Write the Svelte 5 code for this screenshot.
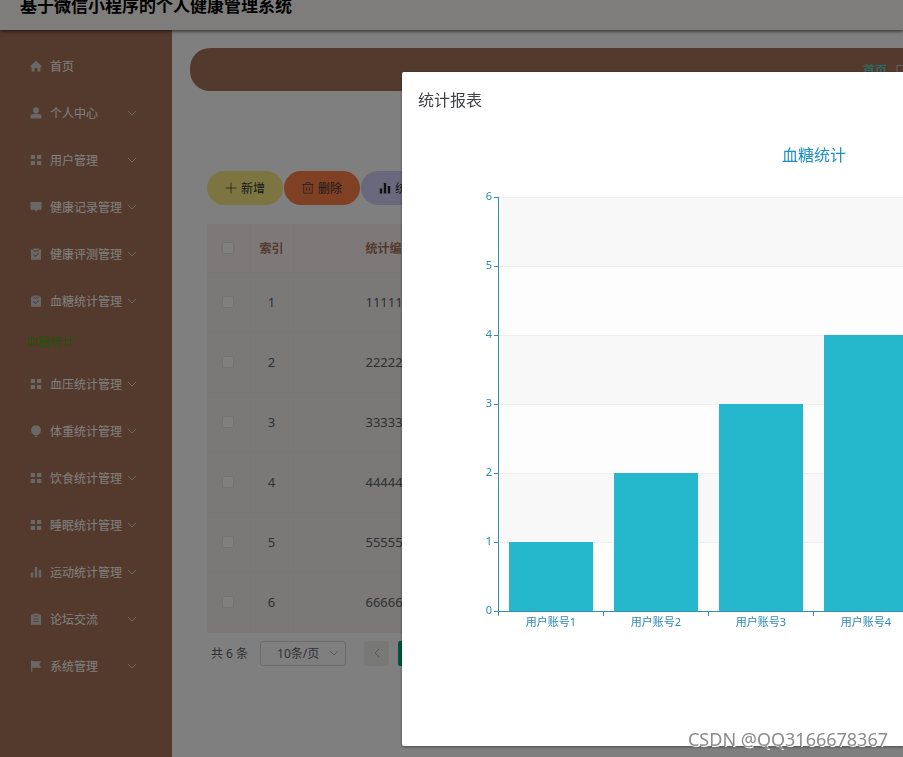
<script>
    const icons = {
        home: 'M6 0.8 L0.5 5.8 V7 H1.6 V11.5 H4.6 V8 H7.4 V11.5 H10.4 V7 H11.5 V5.8 Z',
        user: 'M6 0.3 a2.9 3.1 0 1 1 0 6.2 a2.9 3.1 0 1 1 0 -6.2 Z M0.5 11.5 V9.5 Q0.5 7.2 3.5 7 H8.5 Q11.5 7.2 11.5 9.5 V11.5 Z',
        grid: 'M1.2 1 H5 V5 H0.7 V1.5 Z M7 1 H11.3 V5 H7 Z M0.7 7 H5 V11 H0.7 Z M7 7 H11.3 V11 H7 Z',
        comment: 'M1 1 H11 Q11.5 1 11.5 1.5 V8.8 H8 L6 11 L4.5 8.8 H0.5 V1.5 Q0.5 1 1 1 Z',
        clip: 'M1 1.5 H3.5 V0.5 H8.5 V1.5 H11 V11.8 H1 Z M3.5 2.6 V3.5 H8.5 V2.6 Z M3 6.5 L5.4 9 L9.2 5.6 L8.6 5 L5.4 7.8 L3.7 6 Z',
        bulb: 'M6 0.3 a4.9 4.9 0 0 1 3.2 8.6 L8 10 H4 L2.8 8.9 A4.9 4.9 0 0 1 6 0.3 Z M4.5 10.6 H7.5 V11.8 H4.5 Z',
        bars: 'M0.8 6.5 H3.2 V11.5 H0.8 Z M4.8 1 H7.2 V11.5 H4.8 Z M8.8 4 H11.2 V11.5 H8.8 Z',
        order: 'M1 1.5 H3.5 V0.5 H8.5 V1.5 H11 V11.8 H1 Z M3.5 2.6 V3.5 H8.5 V2.6 Z M3 5.4 V6.3 H9 V5.4 Z M3 8.2 V9.1 H9 V8.2 Z',
        flag: 'M1 0.5 H2.4 V1.3 H11.2 L9.2 4.5 L11.2 7.7 H2.4 V11.8 H1 Z'
    };

    const menu = [
        { name: '首页', icon: 'home', leaf: true },
        { name: '个人中心', icon: 'user' },
        { name: '用户管理', icon: 'grid' },
        { name: '健康记录管理', icon: 'comment' },
        { name: '健康评测管理', icon: 'clip' },
        { name: '血糖统计管理', icon: 'clip', child: '血糖统计' },
        { name: '血压统计管理', icon: 'grid' },
        { name: '体重统计管理', icon: 'bulb' },
        { name: '饮食统计管理', icon: 'grid' },
        { name: '睡眠统计管理', icon: 'grid' },
        { name: '运动统计管理', icon: 'bars' },
        { name: '论坛交流', icon: 'order' },
        { name: '系统管理', icon: 'flag' }
    ];

    const rows = ['11111', '22222', '33333', '44444', '55555', '66666'];

    // chart geometry
    const left = 81;
    const bottom = 483;
    const unit = 69;
    const step = 105;
    const plotWidth = 630;
    const ticks = [0, 1, 2, 3, 4, 5, 6];
    const values = [1, 2, 3, 4, 5, 6];

    let pageSize = '10条/页';
</script>

<div class="page">
    <header>
        <h1>基于微信小程序的个人健康管理系统</h1>
    </header>
    <div class="container">
        <nav>
            <ul>
                {#each menu as item}
                    <li>
                        <a href="#/" class="item">
                            <svg class="icon" viewBox="0 0 12 12"><path d={icons[item.icon]} fill-rule="evenodd" /></svg>
                            <span>{item.name}</span>
                            {#if !item.leaf}
                                <svg class="arrow" viewBox="0 0 10 10"><path d="M1 3 L5 7 L9 3" /></svg>
                            {/if}
                        </a>
                        {#if item.child}
                            <a href="#/" class="child">{item.child}</a>
                        {/if}
                    </li>
                {/each}
            </ul>
        </nav>
        <main>
            <div class="breadcrumb">
                <a href="#/">首页</a>
                <span class="separator">口</span>
            </div>
            <div class="content">
                <div class="actions">
                    <button class="add">
                        <svg viewBox="0 0 12 12"><path d="M6 0.5 V11.5 M0.5 6 H11.5" /></svg>新增
                    </button>
                    <button class="delete">
                        <svg viewBox="0 0 12 12"><path d="M0.5 2.5 H11.5 M4 2.5 V0.7 H8 V2.5 M1.7 2.5 V11.3 H10.3 V2.5 M4.6 5 V9 M7.4 5 V9" /></svg>删除
                    </button>
                    <button class="report">
                        <svg viewBox="0 0 12 12"><path class="solid" d={icons.bars} /></svg>统计报表
                    </button>
                </div>
                <table>
                    <thead>
                        <tr>
                            <th class="check"><input type="checkbox" aria-label="全选"></th>
                            <th class="index">索引</th>
                            <th class="number">统计编号</th>
                        </tr>
                    </thead>
                    <tbody>
                        {#each rows as row, i}
                            <tr>
                                <td class="check"><input type="checkbox" aria-label="选择 {i + 1}"></td>
                                <td class="index">{i + 1}</td>
                                <td class="number">{row}</td>
                            </tr>
                        {/each}
                    </tbody>
                </table>
                <div class="pagination">
                    <span>共 6 条</span>
                    <div class="size">
                        <select bind:value={pageSize} aria-label="每页条数">
                            <option>10条/页</option>
                            <option>20条/页</option>
                        </select>
                        <svg class="arrow" viewBox="0 0 10 10"><path d="M1 3 L5 7 L9 3" /></svg>
                    </div>
                    <button class="prev" aria-label="上一页">
                        <svg class="arrow" viewBox="0 0 10 10"><path d="M7 1 L3 5 L7 9" /></svg>
                    </button>
                    <button class="current">1</button>
                </div>
            </div>
        </main>
    </div>
</div>

<div class="mask">
    <div class="dialog" role="dialog" aria-label="统计报表">
        <h2>统计报表</h2>
        <svg class="chart" width="792" height="598">
            <text class="chart-title" x={left + plotWidth / 2} y="33">血糖统计</text>
            {#each ticks.slice(1) as t}
                <rect x={left} y={bottom - t * unit} width={plotWidth} height={unit} fill={t % 2 ? '#fdfdfd' : '#f8f8f8'} />
                <rect x={left} y={bottom - t * unit} width={plotWidth} height="1" fill="#eeeeee" />
            {/each}
            {#each values as v, i}
                <rect class="bar" x={left + i * step + 10} y={bottom - v * unit} width="84" height={v * unit} />
                <text class="label" text-anchor="middle" x={left + i * step + 52} y={bottom + 15}>用户账号{v}</text>
            {/each}
            <g class="axis">
                <rect x={left - 1} y={bottom - 6 * unit} width="1" height={6 * unit + 5} />
                <rect x={left - 1} y={bottom} width={plotWidth} height="1" />
                {#each ticks as t}
                    <rect x={left - 5} y={bottom - t * unit} width="5" height="1" />
                    <rect x={left - 1 + t * step} y={bottom} width="1" height="5" />
                {/each}
            </g>
            {#each ticks as t}
                <text class="label" text-anchor="end" x={left - 7} y={bottom - t * unit + 3}>{t}</text>
            {/each}
        </svg>
    </div>
</div>
<div class="watermark">CSDN @QQ3166678367</div>

<style>
:global(body) {
    overflow: hidden;
    background: #fff;
    font-family: "Noto Sans", "Noto Sans CJK SC", sans-serif;
    font-size: 12px;
}

h1, h2, ul {
    margin: 0;
    padding: 0;
    list-style: none;
}

a {
    text-decoration: none;
}

button, select {
    font: inherit;
    border: 0;
    padding: 0;
}

.page {
    display: flex;
    flex-direction: column;
    height: 100vh;
    overflow: hidden;
}

header {
    flex: none;
    height: 30px;
    padding-left: 20px;
    background: #fdfbf7;
    box-shadow: 0 1px 4px rgba(0, 0, 0, 0.7);
    z-index: 1;
}

h1 {
    font-size: 17px;
    line-height: 12px;
    color: #000;
}

.container {
    display: flex;
    flex: 1;
}

nav {
    flex: none;
    width: 172px;
    padding-top: 12px;
    box-sizing: border-box;
    background: #a8745a;
}

.item {
    display: flex;
    align-items: center;
    height: 47px;
    padding: 0 35px 0 30px;
    color: #fff;
}

.icon {
    width: 12px;
    height: 12px;
    margin-right: 8px;
    fill: #d0d0d2;
}

.arrow {
    width: 10px;
    height: 10px;
    fill: none;
    stroke: #d8d0cc;
    stroke-width: 1;
}

.item .arrow {
    margin-left: auto;
}

.child {
    display: block;
    padding-left: 26px;
    line-height: 36px;
    color: #50a010;
}

main {
    flex: 1;
    min-width: 0;
    padding: 18px 0 0 18px;
}

.breadcrumb {
    display: flex;
    justify-content: flex-end;
    align-items: center;
    gap: 8px;
    height: 43px;
    border-radius: 20px 0 0 20px;
    background: #a8745a;
}

.breadcrumb a {
    font-weight: bold;
    color: #5cd0c8;
}

.separator {
    width: 8px;
    overflow: hidden;
    color: #c0c4cc;
}

.content {
    padding: 80px 0 0 17px;
}

.actions {
    display: flex;
    gap: 1px;
    margin-bottom: 19px;
}

.actions button {
    display: flex;
    flex: none;
    align-items: center;
    gap: 4px;
    height: 34px;
    padding: 0 18px;
    border-radius: 20px;
    color: #333;
}

.actions svg {
    width: 12px;
    height: 12px;
    fill: none;
    stroke: #444;
    stroke-width: 0.8;
}

.actions .solid {
    fill: #222;
    stroke: none;
}

.add {
    background: #f8ea84;
}

.delete {
    background: #ff8048;
}

.report {
    background: #d4d0fa;
}

table {
    width: 100%;
    table-layout: fixed;
    border-collapse: collapse;
}

th, td {
    padding: 0;
    box-sizing: border-box;
    border-bottom: 1px solid #f0eeec;
}

th {
    height: 48px;
    background: #f8f2f0;
    color: #a8745a;
}

td {
    height: 60px;
    background: #f4f3f1;
    font-size: 13px;
    color: #606266;
}

.check, .index {
    width: 43px;
    text-align: center;
    border-right: 1px solid #f0eeec;
}

.number {
    padding-left: 72px;
    text-align: left;
    white-space: nowrap;
}

input {
    appearance: none;
    display: block;
    width: 12px;
    height: 12px;
    margin: 0 auto;
    border: 1px solid #e8e6e2;
    border-radius: 2px;
    background: #fff;
}

.pagination {
    display: flex;
    align-items: center;
    margin: 8px 0 0 4px;
    color: #606266;
}

.size {
    display: flex;
    align-items: center;
    box-sizing: border-box;
    width: 86px;
    height: 25px;
    margin: 0 18px 0 12px;
    padding-right: 6px;
    border: 1px solid #d6d6d6;
    border-radius: 3px;
}

select {
    flex: 1;
    appearance: none;
    padding-left: 16px;
    background: none;
    color: #606266;
}

.pagination .arrow {
    stroke: #b0b0b0;
}

.prev, .current {
    width: 25px;
    height: 25px;
    margin-right: 9px;
    border-radius: 2px;
    background: #f1f1ef;
}

.current {
    background: #00a878;
    color: #fff;
}

.mask {
    position: fixed;
    inset: 0;
    z-index: 2;
    display: flex;
    align-items: flex-start;
    padding: 72px 0 0 402px;
    background: rgba(0, 0, 0, 0.5);
}

.dialog {
    flex: 1;
    min-width: 0;
    overflow: hidden;
    padding: 0 0 20px 16px;
    border-radius: 2px 0 0 2px;
    background: #fff;
    box-shadow: 0 1px 3px rgba(0, 0, 0, 0.4);
}

h2 {
    font-size: 16px;
    font-weight: normal;
    line-height: 56px;
    color: #404245;
}

.chart {
    display: block;
}

.chart-title {
    font-size: 16px;
    text-anchor: middle;
    fill: #1c8fc4;
}

.label {
    font-size: 11px;
    fill: #2b88b4;
}

.axis {
    fill: #3590b0;
}

.bar {
    fill: #25b7cc;
}

.watermark {
    position: fixed;
    right: 15px;
    bottom: 6px;
    z-index: 3;
    font-size: 18px;
    line-height: 24px;
    color: #8c8c8c;
    text-shadow: 1px 1px 0 #fff;
}
</style>
